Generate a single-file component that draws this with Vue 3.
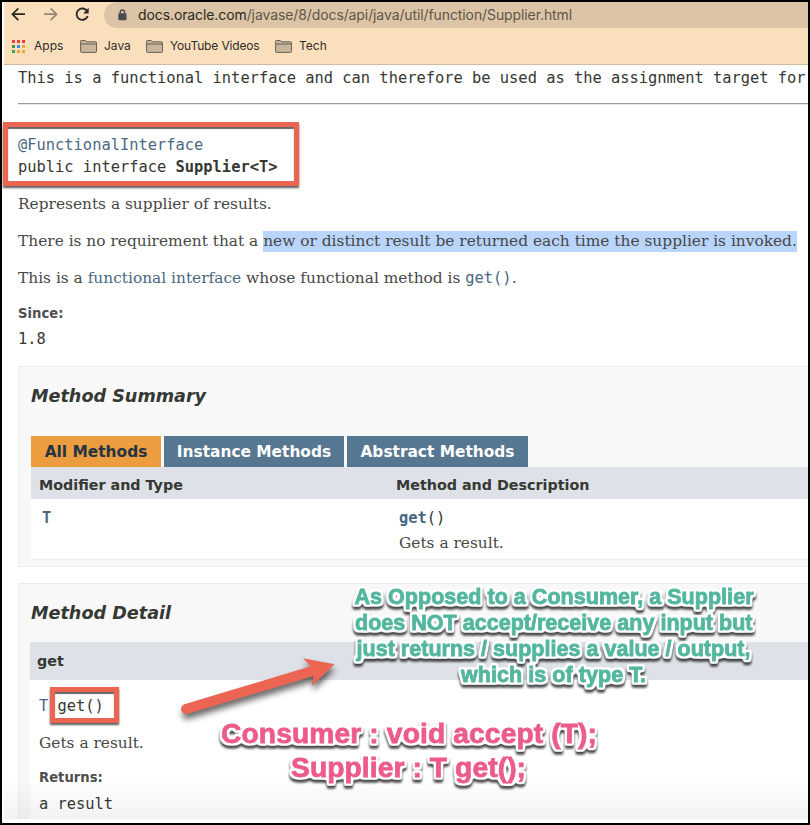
<script setup>
const bookmarks = [
  { name: 'Java', cls: 'java' },
  { name: 'YouTube Videos', cls: 'youtube' },
  { name: 'Tech', cls: 'tech' },
]
const tabs = [
  { name: 'All Methods', cls: 'all' },
  { name: 'Instance Methods', cls: 'instance' },
  { name: 'Abstract Methods', cls: 'abstract' },
]
const dots = ['#e5443a', '#e5443a', '#e5443a', '#3d9c56', '#4285f4', '#eba63c', '#3d9c56', '#eba63c', '#eba63c']
const note = [
  { text: 'As Opposed to a Consumer, a Supplier', x: 354.5, y: 604, w: 399 },
  { text: 'does NOT accept/receive any input but', x: 355, y: 630, w: 397.5 },
  { text: 'just returns / supplies a value / output,', x: 356.5, y: 656, w: 394 },
  { text: 'which is of type T.', x: 461, y: 682, w: 185 },
]
const signatures = [
  { text: 'Consumer : void accept (T);', x: 221, y: 743, w: 376 },
  { text: 'Supplier : T get();', x: 291, y: 777, w: 235 },
]
</script>

<template>
  <div class="frame">
    <header class="chrome">
      <div class="toolbar">
        <svg class="nav" width="104" height="26" viewBox="4 2 104 26">
          <g fill="none" stroke-width="1.7">
            <path d="M25 14.2H12.5M18.3 8.3L12.4 14.2l5.9 5.9" stroke="#2c2925" />
            <path d="M44 14.2h12.5M50.7 8.3l5.9 5.9-5.9 5.9" stroke="#95877a" />
            <path d="M87.2 11.2A5.7 5.7 0 1 0 87.7 16" stroke="#2c2925" stroke-width="1.9" />
          </g>
          <path d="M88.7 7.8v5.6h-5.6z" fill="#2c2925" />
        </svg>
        <div class="address">
          <svg width="9" height="12" viewBox="0 0 9 12">
            <rect x="0.3" y="4.3" width="8.2" height="7" rx="1" fill="#4b4c50" />
            <path d="M2.2 5V3.2a2.2 2.2 0 0 1 4.4 0V5" fill="none" stroke="#4b4c50" stroke-width="1.3" />
          </svg>
          <span class="url"><b>docs.oracle.com</b>/javase/8/docs/api/java/util/function/Supplier.html</span>
        </div>
      </div>
      <nav class="bookmarks">
        <div class="grid"><i v-for="(c, i) in dots" :key="i" :style="{ background: c }"></i></div>
        <span class="apps">Apps</span>
        <template v-for="b in bookmarks" :key="b.name">
          <svg class="folder" width="17" height="13" viewBox="0 0 17 13">
            <path d="M.6 11.500V1.200q0-.7.7-.7h4l1.300 1.300h8.900q1 0 1 1v8.700q0 .9-.9.9H1.500q-.9 0-.9-.9z" fill="#c9b59b" stroke="#696158" />
            <path d="M1 4h15" stroke="#696158" />
          </svg>
          <span :class="b.cls">{{ b.name }}</span>
        </template>
      </nav>
    </header>

    <main class="doc">
      <p class="mono lead">This is a functional interface and can therefore be used as the assignment target for</p>
      <hr />
      <pre class="mono decl"><a>@FunctionalInterface</a>
public interface <b>Supplier&lt;T&gt;</b></pre>
      <p class="serif">Represents a supplier of results.</p>
      <p class="serif">There is no requirement that a <mark>new or distinct result be returned each time the supplier is invoked.</mark></p>
      <p class="serif">This is a <a>functional interface</a> whose functional method is <a class="mono">get()</a>.</p>
      <p class="label since">Since:</p>
      <p class="mono version">1.8</p>

      <section class="panel summary">
        <h3>Method Summary</h3>
        <div class="tabs">
          <div v-for="t in tabs" :key="t.name" class="tab" :class="t.cls">{{ t.name }}</div>
        </div>
        <div class="cols thead"><span>Modifier and Type</span><span>Method and Description</span></div>
        <div class="cols trow">
          <div class="mono"><a><b>T</b></a></div>
          <div>
            <p class="mono"><a><b>get</b></a>()</p>
            <p class="serif desc">Gets a result.</p>
          </div>
        </div>
      </section>

      <section class="panel detail">
        <h3>Method Detail</h3>
        <h4>get</h4>
        <div class="body">
          <p class="mono"><a>T</a> get()</p>
          <p class="serif">Gets a result.</p>
          <p class="label returns">Returns:</p>
          <p class="mono result">a result</p>
        </div>
      </section>
    </main>

    <div class="fade"></div>
    <div class="box decl-box"></div>
    <div class="box get-box"></div>
    <svg class="overlay" width="810" height="825" viewBox="0 0 810 825">
      <defs>
        <!-- White rounded outline with a soft shadow below the lettering -->
        <filter id="sticker" filterUnits="userSpaceOnUse" x="200" y="570" width="600" height="240" color-interpolation-filters="sRGB">
          <feMorphology in="SourceAlpha" operator="dilate" radius="2" result="grown" />
          <feGaussianBlur in="grown" stdDeviation="1" result="soft" />
          <feComponentTransfer in="soft" result="edge">
            <feFuncA type="linear" slope="3" intercept="-0.7" />
          </feComponentTransfer>
          <feFlood flood-color="#fff" />
          <feComposite in2="edge" operator="in" result="outline" />
          <feGaussianBlur in="edge" stdDeviation="1" />
          <feOffset dy="2.500" result="drop" />
          <feFlood flood-color="#000" flood-opacity="0.7" />
          <feComposite in2="drop" operator="in" result="shadow" />
          <feMerge>
            <feMergeNode in="shadow" />
            <feMergeNode in="outline" />
            <feMergeNode in="SourceGraphic" />
          </feMerge>
        </filter>
      </defs>
      <path class="arrow" d="M184.500 704.200L310.700 666.300L303 658.300L334.500 664.300L311.500 686.300L313.700 676L187.700 713.700A5 5 0 0 1 184.500 704.200z" />
      <g class="note" filter="url(#sticker)">
        <text v-for="l in note" :key="l.y" :x="l.x" :y="l.y" :textLength="l.w">{{ l.text }}</text>
      </g>
      <g class="sign" filter="url(#sticker)">
        <text v-for="l in signatures" :key="l.y" :x="l.x" :y="l.y" :textLength="l.w">{{ l.text }}</text>
      </g>
    </svg>
  </div>
</template>

<style>
body { margin: 0; background: #fff; }
</style>

<style scoped>
* { box-sizing: border-box; }
.frame { position: relative; width: 810px; height: 825px; border: 2px solid #000; background: #fff; overflow: hidden; }
p, h3, h4, pre { margin: 0; }
.chrome { margin-left: 2px; height: 63px; background: #fadfbd; border-bottom: 1px solid #cfbb9d; }
.toolbar { display: flex; height: 26px; }
.nav { flex: none; width: 104px; margin-right: -4px; }
.address { flex: 1; display: flex; align-items: center; padding-left: 14px; background: #dcc5a7; border-radius: 13px 0 0 13px; overflow: hidden; }
.address svg { margin-right: 11px; flex: none; }
.url { font: 14px/24px Inter, sans-serif; color: #5f5548; white-space: nowrap; letter-spacing: -0.1px; }
.url b { font-weight: 400; color: #2b2723; }
.bookmarks { display: flex; align-items: center; height: 36px; padding-left: 7px; font: 12px/16px Inter, sans-serif; color: #302c28; white-space: nowrap; }
.youtube { letter-spacing: -0.15px; }
.grid { display: grid; grid-template-columns: repeat(3, 3px); gap: 2px; width: 14px; margin-right: 9px; padding-left: 1px; }
.grid i { height: 3px; width: 3px; }
.apps { width: 46px; }
.folder { margin-right: 7px; flex: none; }
.java { width: 42px; }
.youtube { width: 105px; }
.doc { padding-left: 16px; color: #353833; height: 754px; overflow: hidden; }
.mono { font: 15.4px/22px "DejaVu Sans Mono", monospace; color: #353833; white-space: pre; }
.serif { font: 15.4px/22px "DejaVu Serif", serif; color: #474747; white-space: nowrap; margin-bottom: 15px; }
.doc a, .doc a b { color: #4a6782; }
.serif a.mono { line-height: 18px; }
.lead { padding-top: 2px; }
hr { margin: 14px 0 30px; border: 0; height: 2px; border-top: 1px solid #9b9b9b; border-bottom: 1px solid #e6e6e6; }
.mono.decl { line-height: 21.5px; margin-bottom: 15px; }
mark { background: #b9d5fb; color: inherit; padding: 1px 0 2px; }
.label { font: bold 13.2px/22px "DejaVu Sans", sans-serif; color: #4e4e4e; }
.since { margin-top: -1px; }
.version { margin: 3px 0 16px; }
.panel { border: 1px solid #ededed; border-right: 0; background: #f8f8f8; padding-left: 11px; }
.summary { height: 201px; margin-bottom: 16px; }
h3 { font: italic bold 17.6px/24px "DejaVu Sans", sans-serif; color: #353833; padding: 17px 0 0 1px; }
.tabs { display: flex; gap: 3px; margin-top: 28px; padding-left: 1px; }
.tab { height: 31px; font: bold 15.4px/32px "DejaVu Sans", sans-serif; text-align: center; color: #fff; background: #567792; white-space: nowrap; }
.tab.all { width: 130px; background: #eb9d40; color: #253441; }
.tab.instance { width: 180px; }
.tab.abstract { width: 181px; }
.cols { display: grid; grid-template-columns: 357px 1fr; margin-left: 1px; }
.thead { height: 32px; background: #dee1e7; font: bold 14.3px/37px "DejaVu Sans", sans-serif; padding-left: 8px; }
.trow { height: 61px; background: #fff; padding: 8px 0 0 11px; border-bottom: 1px solid #eee; }
.desc { margin-top: 3px; }
.detail { height: 240px; }
h4 { height: 38px; margin-top: 17px; padding-left: 7px; background: #dee1e7; font: bold 14.3px/38px "DejaVu Sans", sans-serif; color: #353833; }
.body { background: #fff; height: 150px; padding: 15px 0 0 9px; }
.body .mono { margin-bottom: 15px; }
.body .returns { margin-top: -2px; margin-bottom: 4px; }
.fade { position: absolute; left: 2px; right: 0; top: 776px; height: 41px; background: linear-gradient(rgba(0,0,0,0), rgba(0,0,0,.05)); }
.box { position: absolute; border: 5px solid #ec6452; box-shadow: 0 2px 2px rgba(0,0,0,.65), inset 0 2px 1px rgba(0,0,0,.6); }
.decl-box { left: 1px; top: 120px; width: 296px; height: 64px; }
.get-box { left: 48px; top: 685px; width: 69px; height: 36px; }
.overlay { position: absolute; left: -2px; top: -2px; }
.arrow { fill: #ec6452; filter: drop-shadow(1px 5px 3px rgba(0,0,0,.6)); }
.note, .sign { font-family: "Liberation Sans", sans-serif; font-weight: bold; }
.note { font-size: 21.5px; fill: #53b69e; stroke: #53b69e; stroke-width: .8px; }
.sign { font-size: 28.2px; fill: #ec5b89; stroke: #ec5b89; stroke-width: .8px; }
</style>
